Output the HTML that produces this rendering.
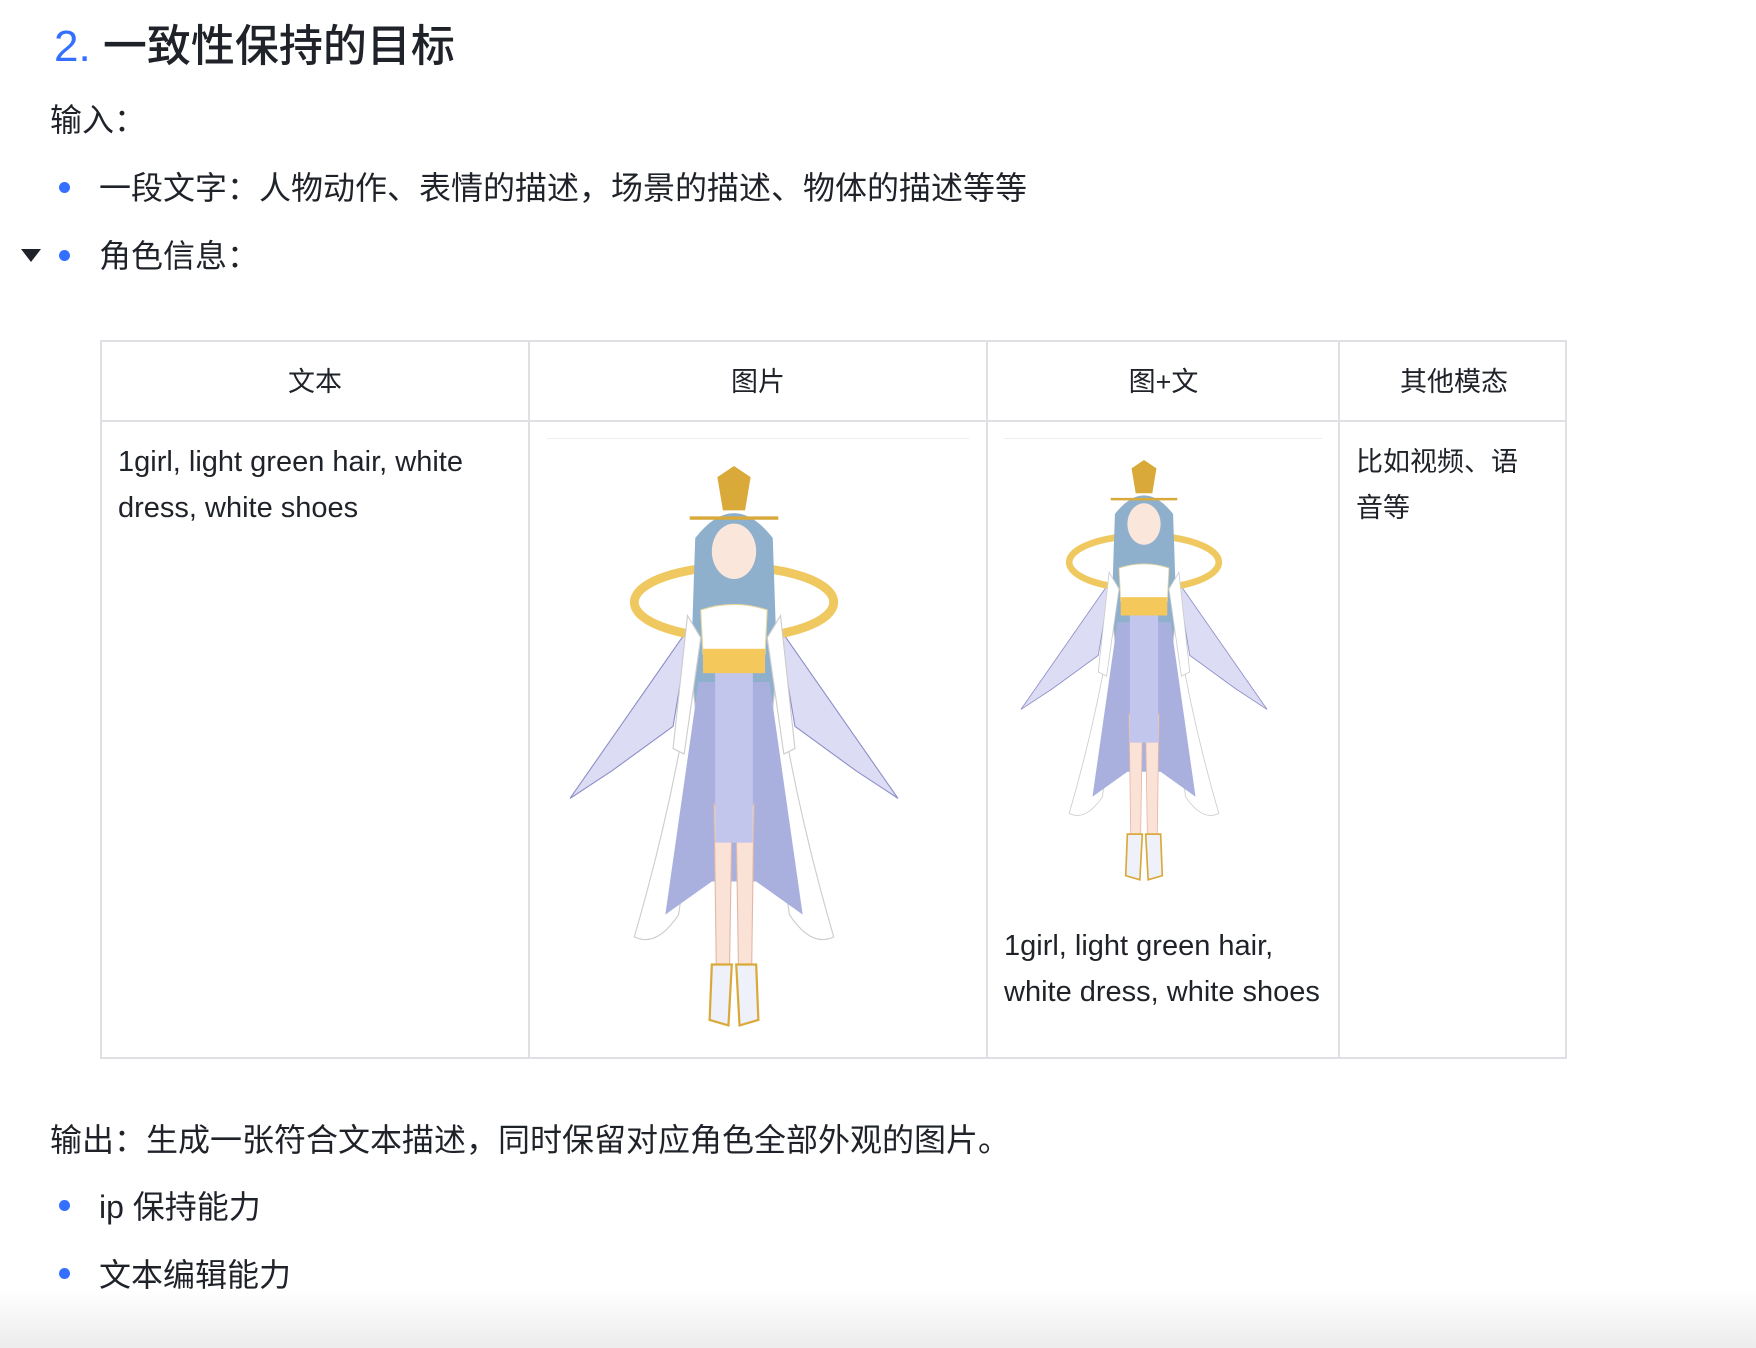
<!DOCTYPE html>
<html><head><meta charset="utf-8"><style>
html,body{margin:0;padding:0;background:#fff;}
body{width:1756px;height:1348px;position:relative;overflow:hidden;font-family:"Liberation Sans","Noto Sans CJK SC",sans-serif;color:#1f2329;}
.a{position:absolute;white-space:nowrap;line-height:1;}
.t{font-size:32px;}
.dot{position:absolute;width:11px;height:11px;border-radius:50%;background:#3370ff;}
.v{position:absolute;background:#dee0e3;}
.c{font-size:27px;line-height:46px;position:absolute;white-space:nowrap;}
.l{font-size:29px;}
.fade{position:absolute;left:0;top:1290px;width:1756px;height:58px;background:linear-gradient(#fff,#ececec);}
</style></head><body>
<div class="a" style="left:54px;top:25px;font-size:44px;font-weight:500;"><span style="color:#3370ff">2.</span> 一致性保持的目标</div>
<div class="a t" style="left:50px;top:104px;">输入：</div>
<div class="dot" style="left:59px;top:182px;"></div>
<div class="a t" style="left:99px;top:172px;">一段文字：人物动作、表情的描述，场景的描述、物体的描述等等</div>
<svg style="position:absolute;left:20px;top:248px" width="22" height="16"><path d="M1 1 H21 L11 14 Z" fill="#1f2329"/></svg>
<div class="dot" style="left:59px;top:250px;"></div>
<div class="a t" style="left:99px;top:240px;">角色信息：</div>

<div style="position:absolute;left:100px;top:340px;width:1467px;height:719px;border:2px solid #dee0e3;box-sizing:border-box;"></div>
<div class="v" style="left:100px;top:420px;width:1467px;height:2px;"></div>
<div class="v" style="left:528px;top:340px;width:2px;height:719px;"></div>
<div class="v" style="left:986px;top:340px;width:2px;height:719px;"></div>
<div class="v" style="left:1338px;top:340px;width:2px;height:719px;"></div>
<div class="c" style="left:100px;width:430px;text-align:center;top:359px;">文本</div>
<div class="c" style="left:530px;width:456px;text-align:center;top:359px;">图片</div>
<div class="c" style="left:988px;width:351px;text-align:center;top:359px;">图+文</div>
<div class="c" style="left:1341px;width:226px;text-align:center;top:359px;">其他模态</div>
<div class="c l" style="left:118px;top:439px;">1girl, light green hair, white<br>dress, white shoes</div>
<div class="c" style="left:1356px;top:439px;">比如视频、语<br>音等</div>
<div class="c l" style="left:1004px;top:923px;">1girl, light green hair,<br>white dress, white shoes</div>
<div style="position:absolute;left:547px;top:438px;width:422px;height:1px;background:#eceef0"></div>
<div style="position:absolute;left:1004px;top:438px;width:318px;height:1px;background:#eceef0"></div>

<svg width="0" height="0" style="position:absolute">
<defs><g id="girl">
<path d="M110 140 L2 295 L40 270 L95 230 Z" fill="#dcdcf4" stroke="#8e8ec8" stroke-width="1"/>
<path d="M190 140 L298 295 L260 270 L205 230 Z" fill="#dcdcf4" stroke="#8e8ec8" stroke-width="1"/>
<ellipse cx="150" cy="118" rx="90" ry="32" fill="none" stroke="#f0c860" stroke-width="8"/>
<path d="M115 60 Q150 15 185 60 L190 210 L110 210 Z" fill="#8fb0cc"/>
<path d="M112 185 Q95 300 60 420 Q80 430 100 400 L120 260 Z" fill="#fff" stroke="#ccc"/>
<path d="M188 185 Q205 300 240 420 Q220 430 200 400 L180 260 Z" fill="#fff" stroke="#ccc"/>
<path d="M118 190 L88 400 L130 370 L170 370 L212 400 L182 190 Z" fill="#a9b0de"/>
<path d="M132 300 L134 445 L146 445 L148 320 Z M152 320 L154 445 L166 445 L168 300 Z" fill="#fbe2d6" stroke="#e0b8a8" stroke-width="1"/>
<rect x="133" y="180" width="34" height="155" fill="#c3c6ec"/>
<path d="M120 125 Q150 115 180 125 L178 165 L122 165 Z" fill="#fff" stroke="#e6d6a0"/>
<rect x="122" y="160" width="56" height="22" fill="#f4c85a"/>
<path d="M108 130 L95 250 L105 255 L120 150 Z M192 130 L205 250 L195 255 L180 150 Z" fill="#fff" stroke="#ccc"/>
<ellipse cx="150" cy="72" rx="20" ry="25" fill="#fbe6dc"/>
<path d="M135 5 L150 -5 L165 5 L160 35 L140 35 Z" fill="#d9a93a"/>
<path d="M110 42 H190" stroke="#d9a93a" stroke-width="3"/>
<path d="M130 445 L128 495 L145 500 L148 445 Z M152 445 L155 500 L172 495 L170 445 Z" fill="#eef0fa" stroke="#d9a93a" stroke-width="2"/>
</g></defs></svg>
<svg style="position:absolute;left:566px;top:466px" width="336" height="565" viewBox="0 -5 300 510"><use href="#girl"/></svg>
<svg style="position:absolute;left:1017px;top:460px" width="254" height="424" viewBox="0 -5 300 510"><use href="#girl"/></svg>

<div class="a t" style="left:50px;top:1124px;">输出：生成一张符合文本描述，同时保留对应角色全部外观的图片。</div>
<div class="dot" style="left:59px;top:1200px;"></div>
<div class="a t" style="left:99px;top:1191px;">ip 保持能力</div>
<div class="dot" style="left:59px;top:1268px;"></div>
<div class="a t" style="left:99px;top:1259px;">文本编辑能力</div>
<div class="fade"></div>
</body></html>
